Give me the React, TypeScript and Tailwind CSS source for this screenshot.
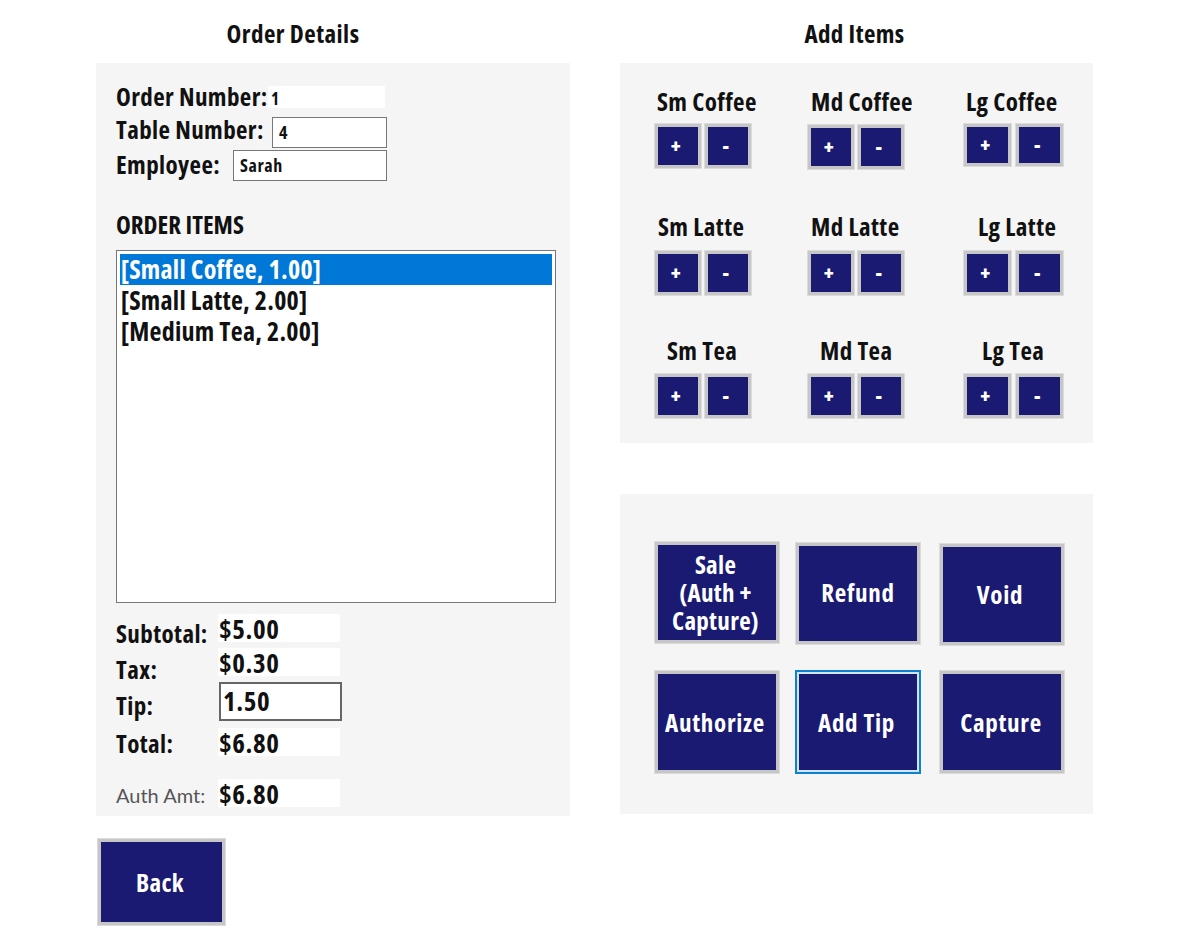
import React from "react";

const font = "font-['Open_Sans','Noto_Sans',sans-serif] [font-stretch:84%] font-bold tracking-[0.4px]";

function Btn({ label, className = "" }: { label: React.ReactNode; className?: string }) {
  return (
    <button
      className={`flex items-center justify-center bg-[#1a1a72] text-white border-[4px] border-[#c6c6c6] outline outline-1 outline-[#dcdcdc] -outline-offset-1 ${className}`}
    >
      {label}
    </button>
  );
}

function Item({ name, labelClass, topClass, gapClass = "gap-[2px]", size = "w-[48px] h-[46px]" }: {
  name: string; labelClass: string; topClass: string; gapClass?: string; size?: string;
}) {
  return (
    <div className="flex flex-col">
      <div className={`-mt-[1px] text-[25px] leading-[30px] whitespace-nowrap text-[#111] ${labelClass}`}>{name}</div>
      <div className={`flex ${gapClass} ${topClass}`}>
        <Btn label="+" className={`${size} text-[20px] font-extrabold leading-none pr-[4px]`} />
        <Btn label="-" className={`${size} text-[20px] font-extrabold leading-none pr-[4px]`} />
      </div>
    </div>
  );
}

function Amount({ value, className = "" }: { value: string; className?: string }) {
  return <div className={`w-[122px] h-[28px] bg-white pl-[1px] text-[27px] leading-[30px] tracking-[0.6px] text-[#111] ${className}`}>{value}</div>;
}

export default function App() {
  return (
    <div className={`w-[1191px] h-[952px] bg-white overflow-hidden flex gap-[50px] pl-[96px] ${font}`}>
      <div className="w-[474px] flex flex-col">
        <h2 className="h-[63px] pt-[16px] pr-[80px] text-center text-[25px] leading-[34px] tracking-[0.45px] text-[#111]">Order Details</h2>
        <div className="h-[753px] bg-[#f5f5f5] pl-[20px] pt-[23px] text-[#111]">
          <div className="flex items-center h-[22px] text-[25px]">
            <span className="w-[152px] whitespace-nowrap">Order Number:</span>
            <div className="w-[117px] h-[22px] bg-white text-[17px] leading-[25px] pl-[3px]">1</div>
          </div>
          <div className="flex items-center h-[32px] mt-[8px] text-[25px]">
            <span className="w-[156px] whitespace-nowrap pb-[5px]">Table Number:</span>
            <input readOnly value="4" className="w-[115px] h-[31px] bg-white border border-[#777] pl-[6px] text-[18px] text-[#111]" />
          </div>
          <div className="flex items-center h-[32px] mt-[1px] text-[25px]">
            <span className="w-[117px] whitespace-nowrap">Employee:</span>
            <input readOnly value="Sarah" className="w-[154px] h-[31px] bg-white border border-[#777] pl-[6px] text-[18px] tracking-[0.6px] text-[#111]" />
          </div>
          <div className="mt-[28px] h-[30px] text-[25px] leading-[30px] tracking-normal">ORDER ITEMS</div>
          <div className="mt-[11px] w-[440px] h-[353px] bg-white border border-[#777] p-[3px] text-[26px] leading-[31px] tracking-[0.25px]">
            <div className="h-[31px] bg-[#0078d7] text-white pl-[1px]">[Small Coffee, 1.00]</div>
            <div className="h-[31px] pl-[1px]">[Small Latte, 2.00]</div>
            <div className="h-[31px] pl-[1px]">[Medium Tea, 2.00]</div>
          </div>
          <div className="mt-[11px] flex h-[28px]">
            <span className="w-[102px] pt-[4px] text-[25px] leading-[30px] whitespace-nowrap">Subtotal:</span>
            <Amount value="$5.00" />
          </div>
          <div className="mt-[6px] flex h-[28px]">
            <span className="w-[102px] pt-[6px] text-[25px] leading-[30px]">Tax:</span>
            <Amount value="$0.30" />
          </div>
          <div className="mt-[6px] flex h-[39px]">
            <span className="w-[103px] pt-[8px] text-[25px] leading-[30px]">Tip:</span>
            <input readOnly value="1.50" className="w-[123px] h-[39px] bg-white border-[2px] border-[#666] pl-[2px] text-[27px] tracking-[0.6px] text-[#111]" />
          </div>
          <div className="mt-[7px] flex h-[28px]">
            <span className="w-[102px] text-[25px] leading-[31px]">Total:</span>
            <Amount value="$6.80" />
          </div>
          <div className="mt-[23px] flex h-[28px]">
            <span className="w-[102px] font-['Lato',sans-serif] font-normal text-[20px] leading-[32px] tracking-normal text-[#555] whitespace-nowrap">Auth Amt:</span>
            <Amount value="$6.80" />
          </div>
        </div>
        <Btn label="Back" className="mt-[22px] ml-[1px] w-[129px] h-[88px] text-[25px] pt-[2px] pr-[3px]" />
      </div>

      <div className="w-[473px] flex flex-col">
        <h2 className="h-[63px] pt-[16px] pr-[4px] text-center text-[25px] leading-[34px] text-[#111]">Add Items</h2>
        <div className="h-[380px] bg-[#f5f5f5] pl-[34px] pt-[24px] grid grid-cols-[153px_156px_102px] grid-rows-[125px_124px_auto]">
          <Item name="Sm Coffee" labelClass="ml-[3px]" topClass="mt-[7px]" />
          <Item name="Md Coffee" labelClass="ml-[4px]" topClass="mt-[8px]" />
          <Item name="Lg Coffee" labelClass="ml-[3px]" topClass="mt-[7px]" gapClass="gap-[3px]" size="w-[49px] h-[44px]" />
          <Item name="Sm Latte" labelClass="ml-[4px]" topClass="mt-[9px]" />
          <Item name="Md Latte" labelClass="ml-[4px]" topClass="mt-[9px]" />
          <Item name="Lg Latte" labelClass="ml-[15px]" topClass="mt-[9px]" gapClass="gap-[3px]" size="w-[49px] h-[46px]" />
          <Item name="Sm Tea" labelClass="ml-[13px]" topClass="mt-[8px]" />
          <Item name="Md Tea" labelClass="ml-[13px]" topClass="mt-[8px]" />
          <Item name="Lg Tea" labelClass="ml-[19px]" topClass="mt-[8px]" gapClass="gap-[3px]" size="w-[49px] h-[46px]" />
        </div>
        <div className="mt-[51px] h-[320px] bg-[#f5f5f5] pl-[34px] pt-[47px] grid grid-cols-[141px_144px_126px] gap-y-[25px] grid-rows-[104px_104px] text-[25px] leading-[28px] tracking-[0.7px] text-center">
          <Btn label={<span className="pb-[2px] pr-[3px] tracking-[0.3px]">Sale<br />(Auth +<br />Capture)</span>} className="w-[126px] h-[103px]" />
          <Btn label={<span className="pb-[4px]">Refund</span>} className="w-[126px] h-[103px] mt-[1px]" />
          <Btn label={<span className="pb-[2px] pr-[4px]">Void</span>} className="w-[126px] h-[103px] mt-[2px]" />
          <Btn label={<span className="pb-[1px] pr-[4px]">Authorize</span>} className="w-[126px] h-[104px]" />
          <button className="w-[126px] h-[104px] flex items-center justify-center bg-[#1a1a72] text-white border-[2px] border-[#0f7fd0] outline outline-[2px] outline-[#cfe6f7] -outline-offset-4 pb-[1px] pr-[3px]">Add Tip</button>
          <Btn label={<span className="pb-[1px] pr-[2px]">Capture</span>} className="w-[126px] h-[104px]" />
        </div>
      </div>
    </div>
  );
}
